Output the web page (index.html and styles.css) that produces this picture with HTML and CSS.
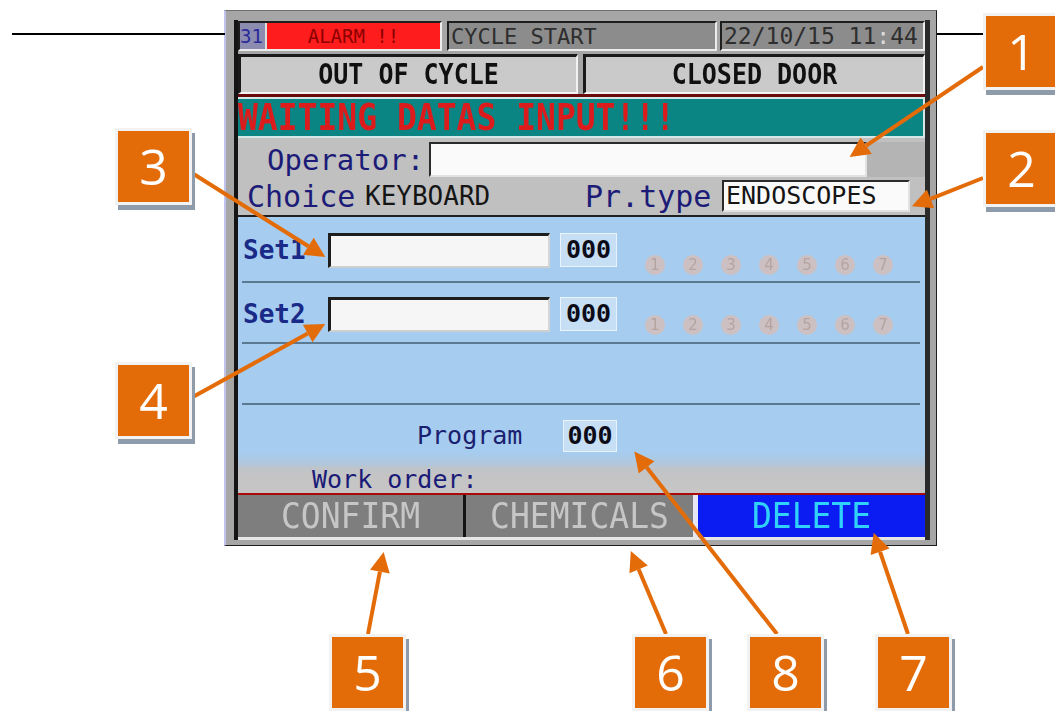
FILE: index.html
```html
<!DOCTYPE html>
<html>
<head>
<meta charset="utf-8">
<title>HMI</title>
<link rel="stylesheet" href="styles.css">
</head>
<body>
<div class="page">
  <div class="screen">
    <div class="inner">
      <div class="row-top">
        <div class="cell alarm"><span class="num">31</span><span class="alarm-txt">ALARM !!</span></div>
        <div class="cell cycle">CYCLE START</div>
        <div class="cell date">22/10/15 11<span class="colon">:</span>44</div>
      </div>
      <div class="row-status">
        <div class="status s1"><span class="tall">OUT OF CYCLE</span></div>
        <div class="status s2"><span class="tall">CLOSED DOOR</span></div>
      </div>
      <div class="redline"></div>
      <div class="waiting"><span class="wait-txt">WAITING DATAS INPUT!!!</span></div>
      <div class="oper">
        <div class="op-row">
          <span class="big-lbl op-lbl">Operator:</span>
          <span class="field op-field"></span>
          <span class="op-dark"></span>
        </div>
        <div class="choice-row">
          <span class="big-lbl choice-lbl">Choice</span>
          <span class="val">KEYBOARD</span>
          <span class="big-lbl pr-lbl">Pr.type</span>
          <span class="field pt-field">ENDOSCOPES</span>
        </div>
      </div>
      <div class="blue">
        <div class="set-row r1">
          <span class="set-lbl">Set1</span>
          <span class="set-field"></span>
          <span class="cnt">000</span>
          <span class="circles">
            <span class="dot">1</span><span class="dot">2</span><span class="dot">3</span><span class="dot">4</span><span class="dot">5</span><span class="dot">6</span><span class="dot">7</span>
          </span>
        </div>
        <div class="sep"></div>
        <div class="set-row r2">
          <span class="set-lbl">Set2</span>
          <span class="set-field"></span>
          <span class="cnt">000</span>
          <span class="circles">
            <span class="dot">1</span><span class="dot">2</span><span class="dot">3</span><span class="dot">4</span><span class="dot">5</span><span class="dot">6</span><span class="dot">7</span>
          </span>
        </div>
        <div class="sep"></div>
        <div class="empty-row"></div>
        <div class="sep"></div>
        <div class="prog-row">
          <span class="prog-lbl">Program</span>
          <span class="cnt prog-cnt">000</span>
        </div>
      </div>
      <div class="work-row"><span class="work-lbl">Work order:</span></div>
      <div class="btns">
        <div class="btn confirm"><span class="btn-txt">CONFIRM</span></div>
        <div class="btn-div dark"></div>
        <div class="btn chem"><span class="btn-txt">CHEMICALS</span></div>
        <div class="btn-div light"></div>
        <div class="btn del"><span class="btn-txt">DELETE</span></div>
      </div>
      <div class="bottom-line"></div>
    </div>
  </div>

  <svg class="overlay" width="1055" height="711" viewBox="0 0 1055 711">
    <defs>
      <marker id="ah" viewBox="0 0 10 10" refX="0" refY="5" markerUnits="userSpaceOnUse" markerWidth="23" markerHeight="20" orient="auto">
        <path d="M0,0 L10,5 L0,10 z" fill="#e36c09"/>
      </marker>
    </defs>
    <line x1="12" y1="34" x2="225" y2="34" stroke="#000" stroke-width="2"/>
    <line x1="937" y1="34" x2="983" y2="34" stroke="#000" stroke-width="2"/>
    <g stroke="#e36c09" stroke-width="4" marker-end="url(#ah)">
      <line x1="983" y1="67" x2="866.2" y2="145.7"/>
      <line x1="983" y1="178" x2="930.5" y2="198.9"/>
      <line x1="192" y1="173" x2="308.4" y2="246.3"/>
      <line x1="191" y1="398" x2="307.7" y2="333.6"/>
      <line x1="368" y1="634" x2="379.9" y2="571.6"/>
      <line x1="666" y1="634" x2="638.6" y2="569.3"/>
      <line x1="777" y1="634" x2="646.6" y2="467.3"/>
      <line x1="908" y1="634" x2="880.1" y2="551.8"/>
    </g>
  </svg>

  <div class="callout c1">1</div>
  <div class="callout c2">2</div>
  <div class="callout c3">3</div>
  <div class="callout c4">4</div>
  <div class="callout c5">5</div>
  <div class="callout c6">6</div>
  <div class="callout c8">8</div>
  <div class="callout c7">7</div>
</div>
</body>
</html>
```

FILE: styles.css
```css
html, body {
  margin: 0;
  padding: 0;
  background: #ffffff;
}
body {
  width: 1055px;
  height: 711px;
  overflow: hidden;
  font-family: "DejaVu Sans Mono", "Liberation Mono", monospace;
}
.page {
  position: relative;
  width: 1055px;
  height: 711px;
  padding-top: 10px;
  box-sizing: border-box;
}

/* ---------- screen frame ---------- */
.screen {
  margin-left: 224px;
  width: 713px;
  box-sizing: border-box;
  background: #a6a6a6;
  border-left: 2px solid #c2c2ee;
  border-right: 1px solid #1e1e1e;
  border-top: 1px solid #6e6e6e;
  border-bottom: 1px solid #1e1e1e;
  padding: 9px 6px 5px 8px;
}
.inner {
  border-left: 4px solid #141414;
  border-right: 5px solid #2a2a2a;
  padding-top: 1px;
  display: flex;
  flex-direction: column;
}

/* ---------- top row ---------- */
.row-top {
  display: flex;
  height: 30px;
}
.cell {
  box-sizing: border-box;
  height: 30px;
  border-top: 2px solid #1e1e1e;
  border-left: 2px solid #1e1e1e;
  border-right: 2px solid #ececec;
  border-bottom: 2px solid #ececec;
  display: flex;
  align-items: center;
  font-size: 22px;
  color: #2e2e2e;
  white-space: nowrap;
}
.alarm {
  width: 204px;
  background: #ff1c1c;
}
.num {
  width: 27px;
  height: 100%;
  background: #8c8cb0;
  color: #2a2a9a;
  font-size: 19px;
  line-height: 26px;
  border-right: 2px solid #e0e0e0;
  box-sizing: border-box;
}
.alarm-txt {
  flex: 1;
  text-align: center;
  color: #8a0000;
  font-size: 19px;
}
.cycle {
  width: 270px;
  margin-left: 5px;
  background: #8c8c8c;
  padding-left: 2px;
}
.date {
  width: 205px;
  margin-left: 3px;
  background: #8c8c8c;
  font-size: 23px;
  padding-left: 2px;
}
.colon {
  color: #dcdcdc;
}

/* ---------- status row ---------- */
.row-status {
  display: flex;
  height: 40px;
  margin-top: 3px;
}
.status {
  box-sizing: border-box;
  height: 40px;
  background: #cacaca;
  border-top: 3px solid #1a1a1a;
  border-left: 3px solid #1a1a1a;
  border-right: 2px solid #f2f2f2;
  border-bottom: 2px solid #f2f2f2;
  display: flex;
  align-items: center;
  justify-content: center;
  font-weight: bold;
  font-size: 25px;
  color: #101010;
}
.s1 { width: 340px; }
.s2 { width: 342px; margin-left: 5px; }
.tall {
  display: inline-block;
  transform: scaleY(1.15);
}
.redline {
  height: 3px;
  background: #6a0a0a;
}

/* ---------- waiting bar ---------- */
.waiting {
  box-sizing: border-box;
  height: 41px;
  background: #0b8484;
  border: 2px solid #d4e6e6;
  border-left: none;
  display: flex;
  align-items: center;
}
.wait-txt {
  display: inline-block;
  font-size: 33px;
  line-height: 33px;
  font-weight: bold;
  color: #dc1c1c;
  transform: scaleY(1.12);
  white-space: nowrap;
}

/* ---------- operator panel ---------- */
.oper {
  box-sizing: border-box;
  height: 77px;
  padding-top: 4px;
  background: #c0c0c0;
}
.op-row {
  display: flex;
  align-items: center;
  height: 35px;
}
.big-lbl {
  color: #1c1c78;
  font-size: 29px;
  white-space: nowrap;
}
.op-lbl {
  margin-left: 29px;
  width: 162px;
}
.field {
  box-sizing: border-box;
  background: #fafafa;
  border-top: 2px solid #2a2a2a;
  border-left: 2px solid #2a2a2a;
  border-right: 2px solid #e2e2e2;
  border-bottom: 2px solid #e2e2e2;
}
.op-field {
  width: 438px;
  height: 35px;
}
.op-dark {
  flex: 1;
  height: 35px;
  background: #b4b4b4;
}
.choice-row {
  display: flex;
  align-items: center;
  height: 32px;
  margin-top: 3px;
}
.choice-lbl {
  font-size: 30px;
  margin-left: 9px;
  width: 108px;
}
.val {
  margin-left: 10px;
  width: 125px;
  font-size: 26px;
  color: #151515;
}
.pr-lbl {
  font-size: 30px;
  margin-left: 95px;
  width: 127px;
}
.pt-field {
  margin-left: 10px;
  width: 188px;
  height: 32px;
  font-size: 25px;
  color: #151515;
  line-height: 28px;
  padding-left: 2px;
  white-space: nowrap;
}

/* ---------- blue area ---------- */
.blue {
  border-top: 2px solid #202020;
  background: #a6ccef;
  display: flex;
  flex-direction: column;
}
.set-row {
  display: flex;
  align-items: flex-start;
  box-sizing: border-box;
}
.r1 { height: 64px; padding-top: 16px; }
.r2 { height: 59px; padding-top: 14px; }
.set-lbl {
  margin-left: 5px;
  width: 85px;
  font-size: 26px;
  font-weight: bold;
  line-height: 35px;
  color: #1a2a88;
}
.set-field {
  box-sizing: border-box;
  width: 222px;
  height: 35px;
  background: #f6f6f6;
  border-top: 3px solid #1e1e1e;
  border-left: 3px solid #1e1e1e;
  border-right: 2px solid #d6d6d6;
  border-bottom: 2px solid #cfcfcf;
}
.cnt {
  box-sizing: border-box;
  margin-left: 10px;
  width: 57px;
  height: 34px;
  background: #c6dff4;
  border: 1px solid #e8f3fc;
  font-size: 25px;
  font-weight: bold;
  color: #0c0c18;
  line-height: 32px;
  text-align: center;
}
.circles {
  display: flex;
  gap: 18px;
  margin-left: 28px;
  margin-top: 22px;
}
.r2 .circles { margin-top: 18px; }
.dot {
  width: 20px;
  height: 20px;
  border-radius: 50%;
  background: #ccc0c2;
  color: #b5a4a2;
  font-family: "DejaVu Sans", sans-serif;
  font-size: 15px;
  line-height: 20px;
  text-align: center;
  filter: blur(0.6px);
}
.sep {
  height: 2px;
  background: #5b7a92;
  margin: 0 5px 0 4px;
}
.empty-row {
  height: 59px;
}
.prog-row {
  box-sizing: border-box;
  height: 61px;
  padding-top: 15px;
  display: flex;
  align-items: flex-start;
  background: linear-gradient(to bottom, #a6ccef 0%, #a6ccef 78%, #b4c6d8 100%);
}
.prog-lbl {
  margin-left: 179px;
  width: 105px;
  font-size: 25px;
  line-height: 32px;
  color: #1a2070;
}
.prog-cnt {
  margin-left: 41px;
  width: 54px;
  height: 32px;
  line-height: 30px;
}

/* ---------- work order ---------- */
.work-row {
  height: 27px;
  background: linear-gradient(to bottom, #bcc4cc 0%, #c4c4c4 35%, #c6c6c6 100%);
  display: flex;
  align-items: center;
}
.work-lbl {
  margin-left: 74px;
  font-size: 25px;
  color: #1a1a78;
  white-space: nowrap;
}

/* ---------- buttons ---------- */
.btns {
  display: flex;
  height: 42px;
  border-top: 2px solid #a80a0a;
}
.btn {
  display: flex;
  align-items: center;
  justify-content: center;
}
.btn-txt {
  display: inline-block;
  font-size: 33px;
  line-height: 36px;
  transform: scaleY(1.1);
  white-space: nowrap;
}
.confirm {
  width: 225px;
  background: #7e7e7e;
  color: #c6c6c6;
}
.chem {
  width: 227px;
  background: #7e7e7e;
  color: #c6c6c6;
}
.del {
  width: 227px;
  background: #0a1cf2;
  color: #30d2fa;
}
.btn-div.dark {
  width: 3px;
  background: #141414;
}
.btn-div.light {
  width: 5px;
  background: #e6e6f4;
}
.bottom-line {
  height: 3px;
  background: #e6e6e6;
}

/* ---------- annotations ---------- */
.overlay {
  position: absolute;
  left: 0;
  top: 0;
  pointer-events: none;
}
.callout {
  position: absolute;
  width: 71px;
  height: 71px;
  background: #e36c09;
  border: 3px solid #f2f2f2;
  box-shadow: 3px 5px 0 #8e9bab;
  color: #ffffff;
  font-family: "Open Sans", "Noto Sans", sans-serif;
  font-size: 50px;
  line-height: 71px;
  text-align: center;
}
.c1 { left: 983px; top: 13px; }
.c2 { left: 983px; top: 130px; }
.c3 { left: 115px; top: 128px; }
.c4 { left: 115px; top: 362px; }
.c5 { left: 329px; top: 634px; }
.c6 { left: 632px; top: 634px; }
.c8 { left: 747px; top: 634px; }
.c7 { left: 875px; top: 634px; }
```
